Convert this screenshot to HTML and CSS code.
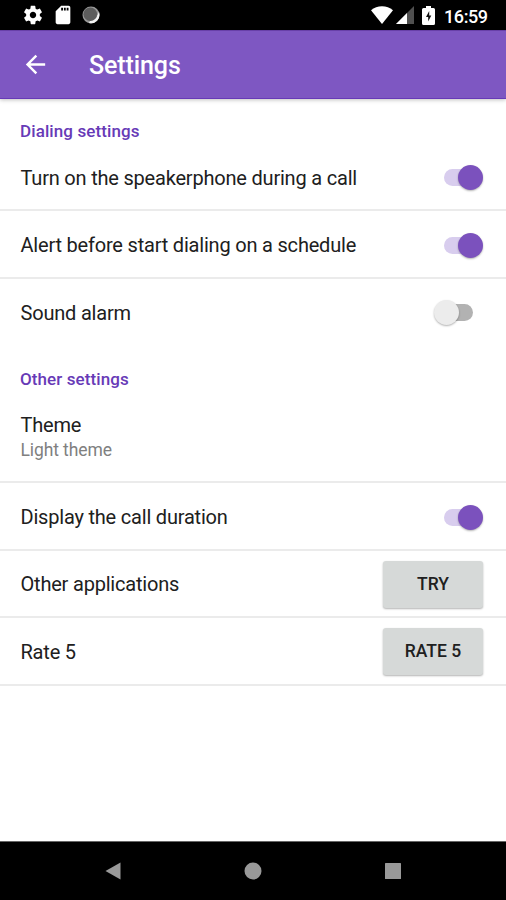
FILE: index.html
```html
<!DOCTYPE html>
<html lang="en">
<head>
<meta charset="utf-8">
<title>Settings</title>
<link rel="stylesheet" href="styles.css">
</head>
<body>
<header class="status">
  <div class="status-left">
    <svg width="22" height="22" viewBox="0 0 24 24" fill="#fff"><path d="M19.43 12.98c.04-.32.07-.64.07-.98s-.03-.66-.07-.98l2.11-1.65c.19-.15.24-.42.12-.64l-2-3.46c-.12-.22-.39-.3-.61-.22l-2.49 1c-.52-.4-1.08-.73-1.69-.98l-.38-2.65A.488.488 0 0 0 14 2h-4c-.25 0-.46.18-.49.42l-.38 2.65c-.61.25-1.17.59-1.69.98l-2.49-1c-.23-.09-.49 0-.61.22l-2 3.46c-.13.22-.07.49.12.64l2.11 1.65c-.04.32-.07.65-.07.98s.03.66.07.98l-2.11 1.65c-.19.15-.24.42-.12.64l2 3.46c.12.22.39.3.61.22l2.49-1c.52.4 1.08.73 1.69.98l.38 2.65c.03.24.24.42.49.42h4c.25 0 .46-.18.49-.42l.38-2.65c.61-.25 1.17-.59 1.69-.98l2.49 1c.23.09.49 0 .61-.22l2-3.46c.12-.22.07-.49-.12-.64l-2.11-1.65zM12 15.500c-1.930 0-3.500-1.570-3.500-3.500s1.570-3.500 3.500-3.500 3.500 1.570 3.500 3.500-1.570 3.500-3.500 3.500z"/></svg>
    <svg width="22" height="22" viewBox="0 0 24 24" fill="#fff"><path d="M18 2h-8L4 8v12c0 1.100.9 2 2 2h12c1.100 0 2-.9 2-2V4c0-1.100-.9-2-2-2zm-6 5h-2V4h2v3zm3 0h-2V4h2v3zm3 0h-2V4h2v3z"/></svg>
    <svg width="18" height="18" viewBox="0 0 18 18"><circle cx="9" cy="9" r="8.500" fill="#999"/><path d="M17 6A8.500 8.500 0 0 1 7 17l1-2 6-3z" fill="#f4f4f4"/><circle cx="8.300" cy="8.300" r="6.800" fill="#5d5d5d"/></svg>
  </div>
  <div class="status-right">
    <svg class="wifi" width="22" height="18" viewBox="0 0 22 18"><path d="M0 4.200C6-1.200 16-1.200 22 4.200L11 18z" fill="#fff"/></svg>
    <svg class="signal" width="18" height="18" viewBox="0 0 18 18"><path d="M0 18L18 0v18z" fill="#505050"/><path d="M0 18L11 7v11z" fill="#fff"/></svg>
    <svg class="battery" width="13" height="19" viewBox="0 0 13 19"><path d="M4 0h5v2h2.500Q13 2 13 3.500v14q0 1.500-1.500 1.500h-10Q0 19 0 17.500v-14Q0 2 1.500 2H4z" fill="#fff"/><path d="M7.200 5L4 11h2.200v4.500L9.300 9.500H7.200z" fill="#111"/></svg>
    <span class="clock">16:59</span>
  </div>
</header>
<div class="appbar">
  <svg width="29" height="29" viewBox="0 0 24 24" fill="#fff"><path d="M20 11H7.830l5.590-5.590L12 4l-8 8 8 8 1.410-1.410L7.830 13H20v-2z"/></svg>
  <h1>Settings</h1>
</div>
<main>
  <h2 class="first">Dialing settings</h2>
  <div class="row"><span>Turn on the speakerphone during a call</span><i class="switch on"></i></div>
  <div class="row tall"><span>Alert before start dialing on a schedule</span><i class="switch on"></i></div>
  <div class="row last"><span>Sound alarm</span><i class="switch"></i></div>
  <h2>Other settings</h2>
  <div class="row theme"><div><p>Theme</p><p class="sub">Light theme</p></div></div>
  <div class="row tall"><span>Display the call duration</span><i class="switch on"></i></div>
  <div class="row action"><span>Other applications</span><button>TRY</button></div>
  <div class="row tall action"><span>Rate 5</span><button>RATE 5</button></div>
</main>
<nav>
  <svg width="16" height="18" viewBox="0 0 16 18"><path d="M.5 9l15-8.500v17z" fill="#999"/></svg>
  <svg width="18" height="18" viewBox="0 0 18 18"><circle cx="9" cy="9" r="8.500" fill="#999"/></svg>
  <svg width="16" height="16" viewBox="0 0 16 16"><rect width="16" height="16" rx=".5" fill="#999"/></svg>
</nav>
</body>
</html>
```
FILE: styles.css
```css
* { box-sizing: border-box; }
body {
  margin: 0;
  height: 900px;
  display: flex;
  flex-direction: column;
  overflow: hidden;
  background: #fff;
  color: #202020;
  font-family: Roboto, sans-serif;
  font-size: 20px;
}
svg { display: block; flex: none; }
h1, h2, p { margin: 0; }
.status {
  height: 30px;
  flex: none;
  display: flex;
  justify-content: space-between;
  background: #000;
  padding: 0 19px 0 21.5px;
}
.status-left, .status-right { display: flex; align-items: center; }
.status-left { gap: 8px; }
.signal { margin-left: 3px; }
.battery { margin-left: 8px; }
.clock {
  width: 43px;
  margin-left: 9px;
  padding-top: 2px;
  color: #fff;
  font-size: 18px;
  font-weight: 500;
  letter-spacing: -.4px;
  white-space: nowrap;
}
.appbar {
  height: 69px;
  flex: none;
  display: flex;
  align-items: center;
  padding: 0 0 0 20.5px;
  background: #7e57c2;
  border-top: 1px solid #6840a8;
  border-bottom: 1px solid #673ab7;
  box-shadow: 0 1px 4px rgba(0, 0, 0, .25);
}
h1 {
  margin-left: 39.5px;
  padding-top: 2px;
  color: #fff;
  font-size: 25px;
  font-weight: 500;
  letter-spacing: -.1px;
}
main { flex: 1; }
h2 {
  height: 48px;
  display: flex;
  align-items: center;
  padding: 17px 20px 0;
  color: #673ab7;
  font-size: 17px;
  font-weight: 500;
  letter-spacing: .1px;
}
h2.first { height: 45px; padding-top: 19px; }
.row {
  height: 67px;
  display: flex;
  align-items: center;
  justify-content: space-between;
  padding: 2px 23px 0 20.5px;
  border-bottom: 2px solid #ebebeb;
  letter-spacing: -.2px;
  white-space: nowrap;
}
.row.tall { height: 68px; }
.row.last { border-color: transparent; }
.row.theme { height: 89px; padding-top: 0; }
.row.action { padding-top: 1px; }
.theme p { line-height: 26px; }
.theme .sub { color: #808080; font-size: 17.5px; line-height: 25px; letter-spacing: -.1px; }
.switch {
  width: 39px;
  height: 25px;
  display: grid;
  align-items: center;
}
.switch::before,
.switch::after {
  content: "";
  grid-area: 1 / 1;
}
.switch::before {
  width: 29px;
  height: 17px;
  justify-self: end;
  border-radius: 9px;
  background: #b2b2b2;
}
.switch::after {
  width: 25px;
  height: 25px;
  border-radius: 50%;
  background: #ececec;
  box-shadow: 0 1px 2px rgba(0, 0, 0, .3);
}
.switch:not(.on) { margin-right: 10px; }
.switch.on::before { justify-self: start; background: #d8cdee; }
.switch.on::after { justify-self: end; background: #7b51bd; }
button {
  width: 100px;
  height: 47px;
  border: 0;
  border-radius: 3px;
  background: #d6d9d8;
  color: #202020;
  font: 500 17.5px Roboto, sans-serif;
  padding: 0 0 1px;
  box-shadow: 0 1px 2px rgba(0, 0, 0, .3);
}
nav {
  height: 59px;
  flex: none;
  display: flex;
  align-items: center;
  justify-content: space-between;
  padding: 0 105px;
  background: #000;
  border-top: 1px solid #666;
}
```
